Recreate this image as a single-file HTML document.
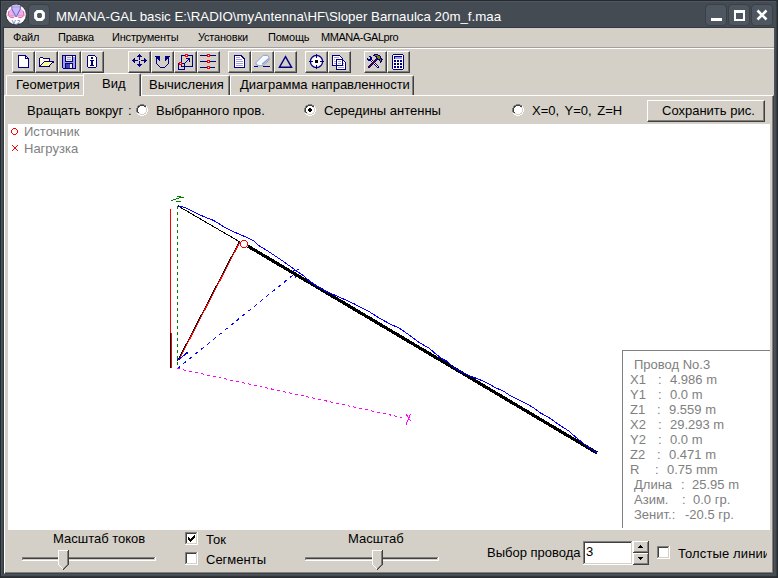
<!DOCTYPE html>
<html><head><meta charset="utf-8">
<style>
*{margin:0;padding:0;box-sizing:border-box}
html,body{width:778px;height:578px;overflow:hidden;background:#3a4046}
body{position:relative;font-family:"Liberation Sans",sans-serif;font-size:13px;color:#000}
.a{position:absolute}
.t{position:absolute;white-space:pre;line-height:15px}
#frame{left:0;top:0;width:778px;height:578px;background:#444b52}
#title{left:56px;top:9px;color:#fff;font-size:13.3px;line-height:16px}
.tbtn{position:absolute;top:4px;width:22px;height:22px;background:#4e575f;border:1px solid #3a4046;border-radius:4px}
#menu{left:4px;top:28px;width:770px;height:20px;background:#d4d0c8;border-bottom:1px solid #a0a0a0}
.mi{position:absolute;top:31px;font-size:11px;line-height:13px;letter-spacing:-0.2px}
#tool{left:4px;top:48px;width:770px;height:47px;background:#d4d0c8;border-top:1px solid #fff}
.btn{position:absolute;top:51px;width:23px;height:22px;background:#d4d0c8;border-left:1px solid #fff;border-top:1px solid #fff;border-right:1px solid #404040;border-bottom:1px solid #404040;box-shadow:inset -1px -1px 0 #808080}
.btn svg{position:absolute;left:0;top:0}
#panel{left:4px;top:95px;width:770px;height:479px;background:#d4d0c8;border-left:1px solid #fff;border-top:1px solid #fff;border-right:1px solid #404040;border-bottom:1px solid #404040;box-shadow:inset -1px -1px 0 #808080}
.tab{position:absolute;top:75px;height:20px;background:#d4d0c8;border-left:1px solid #fff;border-top:1px solid #fff;border-right:1px solid #404040;border-top-left-radius:2px;border-top-right-radius:2px;box-shadow:inset -1px 0 0 #808080}
.radio{position:absolute;width:12px;height:12px;border-radius:50%;background:#fff;border:1px solid #808080;box-shadow:inset 1px 1px 0 #404040}
#canvas{left:8px;top:124px;width:762px;height:406px;background:#fff;overflow:hidden}
.g{color:#808080}
.cb{position:absolute;width:13px;height:13px;background:#fff;border-left:1px solid #808080;border-top:1px solid #808080;border-right:1px solid #fff;border-bottom:1px solid #fff;box-shadow:inset 1px 1px 0 #404040}
</style></head><body>
<div id="frame" class="a"></div>
<div class="a" style="left:0px;top:0px;width:778px;height:1px;background:#262a2e"></div><div class="a" style="left:0px;top:0px;width:1px;height:578px;background:#25292d"></div><div class="a" style="left:777px;top:0px;width:1px;height:578px;background:#2a2e32"></div><div class="a" style="left:0px;top:577px;width:778px;height:1px;background:#2a2e32"></div><div class="a" style="left:1px;top:1px;width:776px;height:1px;background:#4f5860"></div><div class="a" style="left:1px;top:1px;width:1px;height:576px;background:#4b545c"></div><div class="a" style="left:776px;top:1px;width:1px;height:576px;background:#353b40"></div><div class="a" style="left:1px;top:576px;width:776px;height:1px;background:#2f3438"></div><div class="a" style="left:3px;top:27px;width:772px;height:1px;background:#33393f"></div><div class="a" style="left:3px;top:27px;width:1px;height:547px;background:#33393f"></div><div class="a" style="left:774px;top:28px;width:1px;height:546px;background:#4a535b"></div><div class="a" style="left:3px;top:574px;width:772px;height:1px;background:#48525a"></div>
<!-- title bar -->
<svg class="a" style="left:0;top:0" width="32" height="28" viewBox="0 0 32 28">
  <circle cx="16.1" cy="14.6" r="10.3" fill="#fff" stroke="#1c1c1c" stroke-width="0.8"/>
  <path d="M7.9 15.3 Q8.3 9.2 12.5 8.2 L19.5 8.2 Q23.9 9.2 24.3 15.3 Q22 18.2 19 17.6 L16 16.8 L13 17.6 Q10 18.2 7.9 15.3 Z" fill="#f6a8f6"/>
  <path d="M8.3 15.6 Q10.5 18.6 13.8 17.6 M23.9 15.6 Q21.7 18.6 18.4 17.6 M9 11 Q8.2 13 8.3 15 M23.2 11 Q24 13 23.9 15" fill="none" stroke="#d84a70" stroke-width="0.8"/>
  <clipPath id="cc"><circle cx="16.1" cy="14.6" r="10"/></clipPath><path clip-path="url(#cc)" d="M11.6 4 Q16.1 3 20.6 4 L20.3 9.2 L16.1 16.8 L11.9 9.2 Z" fill="#bcbcff" stroke="#4848a8" stroke-width="0.8"/>
  <line x1="12" y1="7" x2="20.2" y2="7" stroke="#e07090" stroke-width="0.6"/>
  <line x1="6" y1="15.3" x2="26.2" y2="15.3" stroke="#a8a0a0" stroke-width="0.6"/>
  <text x="16" y="23.6" font-size="6" text-anchor="middle" fill="#4a4aa0" font-family="Liberation Sans">V.2</text>
</svg>
<div class="tbtn" style="left:28px"></div>
<svg class="a" style="left:29px;top:5px" width="20" height="20"><path d="M8.4 6.6 L12.6 6.6 L14.4 8.4 L14.4 12.6 L12.6 14.4 L8.4 14.4 L6.6 12.6 L6.6 8.4 Z" fill="none" stroke="#fff" stroke-width="3"/></svg>
<div id="title" class="t">MMANA-GAL basic E:\RADIO\myAntenna\HF\Sloper Barnaulca 20m_f.maa</div>
<div class="tbtn" style="left:705px"></div>
<div class="tbtn" style="left:728px"></div>
<div class="tbtn" style="left:751px"></div>
<div class="a" style="left:711px;top:18px;width:11px;height:3px;background:#fff"></div>
<div class="a" style="left:734px;top:10px;width:11px;height:11px;border:2px solid #fff;border-top-width:3px"></div>
<svg class="a" style="left:752px;top:5px" width="20" height="20"><path d="M5.5 5.5 L14.5 14.5 M14.5 5.5 L5.5 14.5" stroke="#fff" stroke-width="2.6"/></svg>

<!-- menu -->
<div id="menu" class="a"></div>
<div class="mi" style="left:13px">Файл</div>
<div class="mi" style="left:58px">Правка</div>
<div class="mi" style="left:112px">Инструменты</div>
<div class="mi" style="left:198px">Установки</div>
<div class="mi" style="left:268px">Помощь</div>
<div class="mi" style="left:321px;letter-spacing:-0.45px">MMANA-GALpro</div>

<div id="tool" class="a"></div>
<div class="btn" style="left:12px"></div>
<div class="btn" style="left:35px"></div>
<div class="btn" style="left:58px"></div>
<div class="btn" style="left:81px"></div>
<div class="btn" style="left:128px"></div>
<div class="btn" style="left:151px"></div>
<div class="btn" style="left:174px"></div>
<div class="btn" style="left:197px"></div>
<div class="btn" style="left:228px"></div>
<div class="btn" style="left:251px"></div>
<div class="btn" style="left:274px"></div>
<div class="btn" style="left:305px"></div>
<div class="btn" style="left:328px"></div>
<div class="btn" style="left:364px"></div>
<div class="btn" style="left:387px"></div>
<!--ICONS--><svg class="a" style="left:0;top:0" width="778" height="100" viewBox="0 0 778 100" shape-rendering="crispEdges"><rect x="18" y="55" width="8" height="1" fill="#000080"/><rect x="18" y="56" width="1" height="1" fill="#000080"/><rect x="19" y="56" width="6" height="1" fill="#ffffff"/><rect x="25" y="56" width="2" height="1" fill="#000080"/><rect x="18" y="57" width="1" height="1" fill="#000080"/><rect x="19" y="57" width="6" height="1" fill="#ffffff"/><rect x="25" y="57" width="1" height="1" fill="#000080"/><rect x="26" y="57" width="1" height="1" fill="#ffffff"/><rect x="27" y="57" width="1" height="1" fill="#000080"/><rect x="18" y="58" width="1" height="1" fill="#000080"/><rect x="19" y="58" width="6" height="1" fill="#ffffff"/><rect x="25" y="58" width="4" height="1" fill="#000080"/><rect x="18" y="59" width="1" height="1" fill="#000080"/><rect x="19" y="59" width="9" height="1" fill="#ffffff"/><rect x="28" y="59" width="1" height="1" fill="#000080"/><rect x="18" y="60" width="1" height="1" fill="#000080"/><rect x="19" y="60" width="9" height="1" fill="#ffffff"/><rect x="28" y="60" width="1" height="1" fill="#000080"/><rect x="18" y="61" width="1" height="1" fill="#000080"/><rect x="19" y="61" width="9" height="1" fill="#ffffff"/><rect x="28" y="61" width="1" height="1" fill="#000080"/><rect x="18" y="62" width="1" height="1" fill="#000080"/><rect x="19" y="62" width="9" height="1" fill="#ffffff"/><rect x="28" y="62" width="1" height="1" fill="#000080"/><rect x="18" y="63" width="1" height="1" fill="#000080"/><rect x="19" y="63" width="9" height="1" fill="#ffffff"/><rect x="28" y="63" width="1" height="1" fill="#000080"/><rect x="18" y="64" width="1" height="1" fill="#000080"/><rect x="19" y="64" width="9" height="1" fill="#ffffff"/><rect x="28" y="64" width="1" height="1" fill="#000080"/><rect x="18" y="65" width="1" height="1" fill="#000080"/><rect x="19" y="65" width="9" height="1" fill="#ffffff"/><rect x="28" y="65" width="1" height="1" fill="#000080"/><rect x="18" y="66" width="1" height="1" fill="#000080"/><rect x="19" y="66" width="9" height="1" fill="#ffffff"/><rect x="28" y="66" width="1" height="1" fill="#000080"/><rect x="18" y="67" width="11" height="1" fill="#000080"/><rect x="40" y="57" width="3" height="1" fill="#000080"/><rect x="39" y="58" width="1" height="1" fill="#000080"/><rect x="40" y="58" width="3" height="1" fill="#ffffe0"/><rect x="43" y="58" width="7" height="1" fill="#000080"/><rect x="39" y="59" width="1" height="1" fill="#000080"/><rect x="40" y="59" width="9" height="1" fill="#ffffe0"/><rect x="49" y="59" width="1" height="1" fill="#000080"/><rect x="39" y="60" width="1" height="1" fill="#000080"/><rect x="40" y="60" width="9" height="1" fill="#ffffe0"/><rect x="49" y="60" width="1" height="1" fill="#000080"/><rect x="39" y="61" width="1" height="1" fill="#000080"/><rect x="40" y="61" width="4" height="1" fill="#ffffe0"/><rect x="44" y="61" width="10" height="1" fill="#000080"/><rect x="39" y="62" width="1" height="1" fill="#000080"/><rect x="40" y="62" width="3" height="1" fill="#ffffe0"/><rect x="43" y="62" width="1" height="1" fill="#000080"/><rect x="44" y="62" width="8" height="1" fill="#ffff99"/><rect x="52" y="62" width="2" height="1" fill="#000080"/><rect x="39" y="63" width="1" height="1" fill="#000080"/><rect x="40" y="63" width="2" height="1" fill="#ffffe0"/><rect x="42" y="63" width="1" height="1" fill="#000080"/><rect x="43" y="63" width="8" height="1" fill="#ffff99"/><rect x="51" y="63" width="1" height="1" fill="#000080"/><rect x="39" y="64" width="1" height="1" fill="#000080"/><rect x="40" y="64" width="1" height="1" fill="#ffffe0"/><rect x="41" y="64" width="1" height="1" fill="#000080"/><rect x="42" y="64" width="8" height="1" fill="#ffff99"/><rect x="50" y="64" width="1" height="1" fill="#000080"/><rect x="39" y="65" width="2" height="1" fill="#000080"/><rect x="41" y="65" width="8" height="1" fill="#ffff99"/><rect x="49" y="65" width="1" height="1" fill="#000080"/><rect x="39" y="66" width="11" height="1" fill="#000080"/><rect x="62" y="55" width="14" height="1" fill="#000080"/><rect x="62" y="56" width="1" height="1" fill="#000080"/><rect x="63" y="56" width="2" height="1" fill="#a0a0e0"/><rect x="65" y="56" width="1" height="1" fill="#000080"/><rect x="66" y="56" width="6" height="1" fill="#f0ecd8"/><rect x="72" y="56" width="1" height="1" fill="#000080"/><rect x="73" y="56" width="2" height="1" fill="#ffffff"/><rect x="75" y="56" width="1" height="1" fill="#000080"/><rect x="62" y="57" width="1" height="1" fill="#000080"/><rect x="63" y="57" width="2" height="1" fill="#a0a0e0"/><rect x="65" y="57" width="1" height="1" fill="#000080"/><rect x="66" y="57" width="1" height="1" fill="#f0ecd8"/><rect x="67" y="57" width="4" height="1" fill="#a0a0e0"/><rect x="71" y="57" width="1" height="1" fill="#f0ecd8"/><rect x="72" y="57" width="1" height="1" fill="#000080"/><rect x="73" y="57" width="2" height="1" fill="#a0a0e0"/><rect x="75" y="57" width="1" height="1" fill="#000080"/><rect x="62" y="58" width="1" height="1" fill="#000080"/><rect x="63" y="58" width="2" height="1" fill="#a0a0e0"/><rect x="65" y="58" width="1" height="1" fill="#000080"/><rect x="66" y="58" width="6" height="1" fill="#f0ecd8"/><rect x="72" y="58" width="1" height="1" fill="#000080"/><rect x="73" y="58" width="2" height="1" fill="#a0a0e0"/><rect x="75" y="58" width="1" height="1" fill="#000080"/><rect x="62" y="59" width="1" height="1" fill="#000080"/><rect x="63" y="59" width="2" height="1" fill="#a0a0e0"/><rect x="65" y="59" width="1" height="1" fill="#000080"/><rect x="66" y="59" width="1" height="1" fill="#f0ecd8"/><rect x="67" y="59" width="4" height="1" fill="#a0a0e0"/><rect x="71" y="59" width="1" height="1" fill="#f0ecd8"/><rect x="72" y="59" width="1" height="1" fill="#000080"/><rect x="73" y="59" width="2" height="1" fill="#a0a0e0"/><rect x="75" y="59" width="1" height="1" fill="#000080"/><rect x="62" y="60" width="1" height="1" fill="#000080"/><rect x="63" y="60" width="2" height="1" fill="#a0a0e0"/><rect x="65" y="60" width="1" height="1" fill="#000080"/><rect x="66" y="60" width="6" height="1" fill="#f0ecd8"/><rect x="72" y="60" width="1" height="1" fill="#000080"/><rect x="73" y="60" width="2" height="1" fill="#a0a0e0"/><rect x="75" y="60" width="1" height="1" fill="#000080"/><rect x="62" y="61" width="1" height="1" fill="#000080"/><rect x="63" y="61" width="2" height="1" fill="#a0a0e0"/><rect x="65" y="61" width="8" height="1" fill="#000080"/><rect x="73" y="61" width="2" height="1" fill="#a0a0e0"/><rect x="75" y="61" width="1" height="1" fill="#000080"/><rect x="62" y="62" width="1" height="1" fill="#000080"/><rect x="63" y="62" width="12" height="1" fill="#a0a0e0"/><rect x="75" y="62" width="1" height="1" fill="#000080"/><rect x="62" y="63" width="1" height="1" fill="#000080"/><rect x="63" y="63" width="2" height="1" fill="#a0a0e0"/><rect x="65" y="63" width="8" height="1" fill="#000080"/><rect x="73" y="63" width="2" height="1" fill="#a0a0e0"/><rect x="75" y="63" width="1" height="1" fill="#000080"/><rect x="62" y="64" width="1" height="1" fill="#000080"/><rect x="63" y="64" width="2" height="1" fill="#a0a0e0"/><rect x="65" y="64" width="1" height="1" fill="#000080"/><rect x="66" y="64" width="4" height="1" fill="#4040b8"/><rect x="70" y="64" width="2" height="1" fill="#f0ecd8"/><rect x="72" y="64" width="1" height="1" fill="#000080"/><rect x="73" y="64" width="2" height="1" fill="#a0a0e0"/><rect x="75" y="64" width="1" height="1" fill="#000080"/><rect x="62" y="65" width="1" height="1" fill="#000080"/><rect x="63" y="65" width="2" height="1" fill="#a0a0e0"/><rect x="65" y="65" width="1" height="1" fill="#000080"/><rect x="66" y="65" width="4" height="1" fill="#4040b8"/><rect x="70" y="65" width="2" height="1" fill="#f0ecd8"/><rect x="72" y="65" width="1" height="1" fill="#000080"/><rect x="73" y="65" width="2" height="1" fill="#a0a0e0"/><rect x="75" y="65" width="1" height="1" fill="#000080"/><rect x="62" y="66" width="1" height="1" fill="#000080"/><rect x="63" y="66" width="2" height="1" fill="#a0a0e0"/><rect x="65" y="66" width="1" height="1" fill="#000080"/><rect x="66" y="66" width="4" height="1" fill="#4040b8"/><rect x="70" y="66" width="2" height="1" fill="#f0ecd8"/><rect x="72" y="66" width="1" height="1" fill="#000080"/><rect x="73" y="66" width="2" height="1" fill="#a0a0e0"/><rect x="75" y="66" width="1" height="1" fill="#000080"/><rect x="62" y="67" width="1" height="1" fill="#000080"/><rect x="63" y="67" width="2" height="1" fill="#a0a0e0"/><rect x="65" y="67" width="1" height="1" fill="#000080"/><rect x="66" y="67" width="4" height="1" fill="#4040b8"/><rect x="70" y="67" width="2" height="1" fill="#f0ecd8"/><rect x="72" y="67" width="1" height="1" fill="#000080"/><rect x="73" y="67" width="2" height="1" fill="#a0a0e0"/><rect x="75" y="67" width="1" height="1" fill="#000080"/><rect x="63" y="68" width="13" height="1" fill="#000080"/><rect x="88" y="55" width="7" height="1" fill="#000080"/><rect x="87" y="56" width="1" height="1" fill="#000080"/><rect x="88" y="56" width="7" height="1" fill="#ffffff"/><rect x="95" y="56" width="1" height="1" fill="#000080"/><rect x="87" y="57" width="1" height="1" fill="#000080"/><rect x="88" y="57" width="3" height="1" fill="#ffffff"/><rect x="91" y="57" width="2" height="1" fill="#000080"/><rect x="93" y="57" width="3" height="1" fill="#ffffff"/><rect x="96" y="57" width="1" height="1" fill="#000080"/><rect x="87" y="58" width="1" height="1" fill="#000080"/><rect x="88" y="58" width="3" height="1" fill="#ffffff"/><rect x="91" y="58" width="2" height="1" fill="#000080"/><rect x="93" y="58" width="3" height="1" fill="#ffffff"/><rect x="96" y="58" width="1" height="1" fill="#000080"/><rect x="87" y="59" width="1" height="1" fill="#000080"/><rect x="88" y="59" width="8" height="1" fill="#ffffff"/><rect x="96" y="59" width="1" height="1" fill="#000080"/><rect x="87" y="60" width="1" height="1" fill="#000080"/><rect x="88" y="60" width="2" height="1" fill="#ffffff"/><rect x="90" y="60" width="4" height="1" fill="#000080"/><rect x="94" y="60" width="2" height="1" fill="#ffffff"/><rect x="96" y="60" width="1" height="1" fill="#000080"/><rect x="87" y="61" width="1" height="1" fill="#000080"/><rect x="88" y="61" width="3" height="1" fill="#ffffff"/><rect x="91" y="61" width="2" height="1" fill="#000080"/><rect x="93" y="61" width="3" height="1" fill="#ffffff"/><rect x="96" y="61" width="1" height="1" fill="#000080"/><rect x="87" y="62" width="1" height="1" fill="#000080"/><rect x="88" y="62" width="3" height="1" fill="#ffffff"/><rect x="91" y="62" width="2" height="1" fill="#000080"/><rect x="93" y="62" width="3" height="1" fill="#ffffff"/><rect x="96" y="62" width="1" height="1" fill="#000080"/><rect x="87" y="63" width="1" height="1" fill="#000080"/><rect x="88" y="63" width="3" height="1" fill="#ffffff"/><rect x="91" y="63" width="2" height="1" fill="#000080"/><rect x="93" y="63" width="3" height="1" fill="#ffffff"/><rect x="96" y="63" width="1" height="1" fill="#000080"/><rect x="87" y="64" width="1" height="1" fill="#000080"/><rect x="88" y="64" width="3" height="1" fill="#ffffff"/><rect x="91" y="64" width="2" height="1" fill="#000080"/><rect x="93" y="64" width="3" height="1" fill="#ffffff"/><rect x="96" y="64" width="1" height="1" fill="#000080"/><rect x="87" y="65" width="1" height="1" fill="#000080"/><rect x="88" y="65" width="2" height="1" fill="#ffffff"/><rect x="90" y="65" width="4" height="1" fill="#000080"/><rect x="94" y="65" width="2" height="1" fill="#ffffff"/><rect x="96" y="65" width="1" height="1" fill="#000080"/><rect x="87" y="66" width="1" height="1" fill="#000080"/><rect x="88" y="66" width="8" height="1" fill="#ffffff"/><rect x="96" y="66" width="1" height="1" fill="#000080"/><rect x="88" y="67" width="8" height="1" fill="#000080"/><rect x="139" y="54" width="1" height="1" fill="#000080"/><rect x="138" y="55" width="3" height="1" fill="#000080"/><rect x="137" y="56" width="5" height="1" fill="#000080"/><rect x="139" y="57" width="1" height="1" fill="#000080"/><rect x="134" y="58" width="1" height="1" fill="#000080"/><rect x="139" y="58" width="1" height="1" fill="#000080"/><rect x="144" y="58" width="1" height="1" fill="#000080"/><rect x="133" y="59" width="2" height="1" fill="#000080"/><rect x="139" y="59" width="1" height="1" fill="#000080"/><rect x="144" y="59" width="2" height="1" fill="#000080"/><rect x="132" y="60" width="6" height="1" fill="#000080"/><rect x="141" y="60" width="6" height="1" fill="#000080"/><rect x="133" y="61" width="2" height="1" fill="#000080"/><rect x="139" y="61" width="1" height="1" fill="#000080"/><rect x="144" y="61" width="2" height="1" fill="#000080"/><rect x="134" y="62" width="1" height="1" fill="#000080"/><rect x="139" y="62" width="1" height="1" fill="#000080"/><rect x="144" y="62" width="1" height="1" fill="#000080"/><rect x="139" y="63" width="1" height="1" fill="#000080"/><rect x="137" y="64" width="5" height="1" fill="#000080"/><rect x="138" y="65" width="3" height="1" fill="#000080"/><rect x="139" y="66" width="1" height="1" fill="#000080"/><rect x="155" y="56" width="5" height="1" fill="#000080"/><rect x="165" y="56" width="5" height="1" fill="#000080"/><rect x="156" y="57" width="4" height="1" fill="#000080"/><rect x="165" y="57" width="4" height="1" fill="#000080"/><rect x="156" y="58" width="4" height="1" fill="#000080"/><rect x="165" y="58" width="4" height="1" fill="#000080"/><rect x="156" y="59" width="1" height="1" fill="#000080"/><rect x="158" y="59" width="2" height="1" fill="#000080"/><rect x="165" y="59" width="2" height="1" fill="#000080"/><rect x="168" y="59" width="1" height="1" fill="#000080"/><rect x="156" y="60" width="1" height="1" fill="#000080"/><rect x="159" y="60" width="1" height="1" fill="#000080"/><rect x="165" y="60" width="1" height="1" fill="#000080"/><rect x="168" y="60" width="1" height="1" fill="#000080"/><rect x="156" y="61" width="1" height="1" fill="#000080"/><rect x="168" y="61" width="1" height="1" fill="#000080"/><rect x="156" y="62" width="1" height="1" fill="#000080"/><rect x="168" y="62" width="1" height="1" fill="#000080"/><rect x="156" y="63" width="1" height="1" fill="#000080"/><rect x="168" y="63" width="1" height="1" fill="#000080"/><rect x="157" y="64" width="1" height="1" fill="#000080"/><rect x="167" y="64" width="1" height="1" fill="#000080"/><rect x="158" y="65" width="1" height="1" fill="#000080"/><rect x="166" y="65" width="1" height="1" fill="#000080"/><rect x="159" y="66" width="1" height="1" fill="#000080"/><rect x="165" y="66" width="1" height="1" fill="#000080"/><rect x="160" y="67" width="5" height="1" fill="#000080"/><path d="M181.5 55.5 H192.5 V66.5 H181.5 Z M178.5 63.5 H184.5 V69.5 H178.5 Z" fill="none" stroke="#000080" stroke-width="1"/><rect x="186" y="58" width="4" height="1" fill="#000080"/><rect x="188" y="59" width="2" height="1" fill="#000080"/><rect x="187" y="60" width="1" height="1" fill="#000080"/><rect x="189" y="60" width="1" height="1" fill="#000080"/><rect x="186" y="61" width="1" height="1" fill="#000080"/><rect x="189" y="61" width="1" height="1" fill="#000080"/><rect x="185" y="62" width="1" height="1" fill="#000080"/><rect x="185" y="54" width="3" height="1" fill="#ff0000"/><rect x="185" y="55" width="1" height="1" fill="#ff0000"/><rect x="186" y="55" width="1" height="1" fill="#ffffff"/><rect x="187" y="55" width="1" height="1" fill="#ff0000"/><rect x="185" y="56" width="3" height="1" fill="#ff0000"/><rect x="179" y="62" width="3" height="1" fill="#ff0000"/><rect x="179" y="63" width="1" height="1" fill="#ff0000"/><rect x="180" y="63" width="1" height="1" fill="#ffffff"/><rect x="181" y="63" width="1" height="1" fill="#ff0000"/><rect x="179" y="64" width="3" height="1" fill="#ff0000"/><rect x="200" y="55" width="16" height="1" fill="#000080"/><rect x="207" y="54" width="3" height="1" fill="#ff0000"/><rect x="207" y="55" width="1" height="1" fill="#ff0000"/><rect x="208" y="55" width="1" height="1" fill="#ffffff"/><rect x="209" y="55" width="1" height="1" fill="#ff0000"/><rect x="207" y="56" width="3" height="1" fill="#ff0000"/><rect x="200" y="61" width="16" height="1" fill="#000080"/><rect x="207" y="60" width="3" height="1" fill="#ff0000"/><rect x="207" y="61" width="1" height="1" fill="#ff0000"/><rect x="208" y="61" width="1" height="1" fill="#ffffff"/><rect x="209" y="61" width="1" height="1" fill="#ff0000"/><rect x="207" y="62" width="3" height="1" fill="#ff0000"/><rect x="200" y="67" width="15" height="1" fill="#000080"/><rect x="207" y="66" width="3" height="1" fill="#ff0000"/><rect x="207" y="67" width="1" height="1" fill="#ff0000"/><rect x="208" y="67" width="1" height="1" fill="#ffffff"/><rect x="209" y="67" width="1" height="1" fill="#ff0000"/><rect x="207" y="68" width="3" height="1" fill="#ff0000"/><rect x="234" y="55" width="8" height="1" fill="#000080"/><rect x="234" y="56" width="1" height="1" fill="#000080"/><rect x="235" y="56" width="6" height="1" fill="#ffffff"/><rect x="241" y="56" width="2" height="1" fill="#000080"/><rect x="234" y="57" width="1" height="1" fill="#000080"/><rect x="235" y="57" width="1" height="1" fill="#ffffff"/><rect x="236" y="57" width="4" height="1" fill="#a0a0e0"/><rect x="240" y="57" width="2" height="1" fill="#ffffff"/><rect x="242" y="57" width="2" height="1" fill="#000080"/><rect x="234" y="58" width="1" height="1" fill="#000080"/><rect x="235" y="58" width="8" height="1" fill="#ffffff"/><rect x="243" y="58" width="2" height="1" fill="#000080"/><rect x="234" y="59" width="1" height="1" fill="#000080"/><rect x="235" y="59" width="1" height="1" fill="#ffffff"/><rect x="236" y="59" width="6" height="1" fill="#a0a0e0"/><rect x="242" y="59" width="2" height="1" fill="#ffffff"/><rect x="244" y="59" width="1" height="1" fill="#000080"/><rect x="234" y="60" width="1" height="1" fill="#000080"/><rect x="235" y="60" width="9" height="1" fill="#ffffff"/><rect x="244" y="60" width="1" height="1" fill="#000080"/><rect x="234" y="61" width="1" height="1" fill="#000080"/><rect x="235" y="61" width="1" height="1" fill="#ffffff"/><rect x="236" y="61" width="7" height="1" fill="#a0a0e0"/><rect x="243" y="61" width="1" height="1" fill="#ffffff"/><rect x="244" y="61" width="1" height="1" fill="#000080"/><rect x="234" y="62" width="1" height="1" fill="#000080"/><rect x="235" y="62" width="9" height="1" fill="#ffffff"/><rect x="244" y="62" width="1" height="1" fill="#000080"/><rect x="234" y="63" width="1" height="1" fill="#000080"/><rect x="235" y="63" width="1" height="1" fill="#ffffff"/><rect x="236" y="63" width="7" height="1" fill="#a0a0e0"/><rect x="243" y="63" width="1" height="1" fill="#ffffff"/><rect x="244" y="63" width="1" height="1" fill="#000080"/><rect x="234" y="64" width="1" height="1" fill="#000080"/><rect x="235" y="64" width="9" height="1" fill="#ffffff"/><rect x="244" y="64" width="1" height="1" fill="#000080"/><rect x="234" y="65" width="1" height="1" fill="#000080"/><rect x="235" y="65" width="1" height="1" fill="#ffffff"/><rect x="236" y="65" width="7" height="1" fill="#a0a0e0"/><rect x="243" y="65" width="1" height="1" fill="#ffffff"/><rect x="244" y="65" width="1" height="1" fill="#000080"/><rect x="234" y="66" width="1" height="1" fill="#000080"/><rect x="235" y="66" width="9" height="1" fill="#ffffff"/><rect x="244" y="66" width="1" height="1" fill="#000080"/><rect x="234" y="67" width="11" height="1" fill="#000080"/><g shape-rendering="auto"><path d="M256 62.6 L263.2 55.3 L267.6 55.4 L269.2 57.6 L268.8 60.4 L263.2 65.2 L260 65.9 L256.3 64.6 Z" fill="#f4f8ff" stroke="#7f94c8" stroke-width="0.9"/><path d="M262.5 65 L268.8 59.5 L269 57.5 L262 63.5 Z" fill="#8fa0c8"/></g><rect x="254" y="66" width="4" height="1" fill="#000080"/><rect x="263" y="66" width="7" height="1" fill="#000080"/><path d="M285.5 56.6 L291.6 67.3 H279.4 Z" fill="none" stroke="#000080" stroke-width="1.4" shape-rendering="auto"/><circle cx="316.5" cy="61.5" r="6.1" fill="#fff" stroke="#000080" stroke-width="1.3" shape-rendering="auto"/><rect x="309" y="61" width="4" height="1" fill="#000080"/><rect x="320" y="61" width="4" height="1" fill="#000080"/><rect x="316" y="54" width="1" height="4" fill="#000080"/><rect x="316" y="65" width="1" height="4" fill="#000080"/><rect x="315" y="60" width="3" height="3" fill="#000000"/><path d="M332.5 55.5 H339.5 L342.5 58.5 V65.5 H332.5 Z" fill="#fff" stroke="#000080" stroke-width="1"/><rect x="334" y="57" width="5" height="1" fill="#a0a0e0"/><rect x="334" y="59" width="1" height="1" fill="#a0a0e0"/><rect x="334" y="61" width="2" height="1" fill="#a0a0e0"/><rect x="334" y="63" width="2" height="1" fill="#a0a0e0"/><path d="M336.5 59.5 H342.5 L345.5 62.5 V69.5 H336.5 Z" fill="#fff" stroke="#000080" stroke-width="1"/><path d="M342.5 59.5 V65.5 H336.5" fill="none" stroke="#000080" stroke-width="1"/><rect x="338" y="61" width="3" height="1" fill="#a0a0e0"/><rect x="338" y="63" width="3" height="1" fill="#a0a0e0"/><rect x="343" y="63" width="1" height="1" fill="#a0a0e0"/><rect x="343" y="65" width="1" height="1" fill="#a0a0e0"/><rect x="338" y="67" width="6" height="1" fill="#a0a0e0"/><rect x="374" y="54" width="4" height="1" fill="#000080"/><rect x="373" y="55" width="2" height="1" fill="#000080"/><rect x="375" y="55" width="3" height="1" fill="#808000"/><rect x="378" y="55" width="2" height="1" fill="#000080"/><rect x="369" y="56" width="2" height="1" fill="#000080"/><rect x="375" y="56" width="2" height="1" fill="#000080"/><rect x="377" y="56" width="3" height="1" fill="#808000"/><rect x="380" y="56" width="1" height="1" fill="#000080"/><rect x="370" y="57" width="2" height="1" fill="#000080"/><rect x="376" y="57" width="1" height="1" fill="#000080"/><rect x="377" y="57" width="3" height="1" fill="#808000"/><rect x="380" y="57" width="1" height="1" fill="#000080"/><rect x="367" y="58" width="1" height="1" fill="#000080"/><rect x="370" y="58" width="2" height="1" fill="#000080"/><rect x="376" y="58" width="2" height="1" fill="#000080"/><rect x="378" y="58" width="2" height="1" fill="#808000"/><rect x="380" y="58" width="2" height="1" fill="#000080"/><rect x="367" y="59" width="5" height="1" fill="#000080"/><rect x="375" y="59" width="1" height="1" fill="#000080"/><rect x="376" y="59" width="1" height="1" fill="#900000"/><rect x="377" y="59" width="3" height="1" fill="#000080"/><rect x="380" y="59" width="1" height="1" fill="#808000"/><rect x="381" y="59" width="2" height="1" fill="#000080"/><rect x="368" y="60" width="3" height="1" fill="#000080"/><rect x="371" y="60" width="1" height="1" fill="#ffffff"/><rect x="372" y="60" width="1" height="1" fill="#000080"/><rect x="374" y="60" width="1" height="1" fill="#000080"/><rect x="375" y="60" width="1" height="1" fill="#900000"/><rect x="376" y="60" width="1" height="1" fill="#000080"/><rect x="379" y="60" width="1" height="1" fill="#000080"/><rect x="380" y="60" width="1" height="1" fill="#808000"/><rect x="381" y="60" width="1" height="1" fill="#000080"/><rect x="371" y="61" width="1" height="1" fill="#000080"/><rect x="372" y="61" width="1" height="1" fill="#ffffff"/><rect x="373" y="61" width="1" height="1" fill="#000080"/><rect x="374" y="61" width="1" height="1" fill="#900000"/><rect x="375" y="61" width="1" height="1" fill="#000080"/><rect x="380" y="61" width="2" height="1" fill="#000080"/><rect x="372" y="62" width="1" height="1" fill="#000080"/><rect x="373" y="62" width="1" height="1" fill="#900000"/><rect x="374" y="62" width="1" height="1" fill="#000080"/><rect x="380" y="62" width="1" height="1" fill="#000080"/><rect x="371" y="63" width="1" height="1" fill="#000080"/><rect x="372" y="63" width="1" height="1" fill="#900000"/><rect x="373" y="63" width="1" height="1" fill="#000080"/><rect x="374" y="63" width="1" height="1" fill="#ffffff"/><rect x="375" y="63" width="1" height="1" fill="#000080"/><rect x="370" y="64" width="1" height="1" fill="#000080"/><rect x="371" y="64" width="1" height="1" fill="#900000"/><rect x="372" y="64" width="1" height="1" fill="#000080"/><rect x="374" y="64" width="1" height="1" fill="#000080"/><rect x="375" y="64" width="1" height="1" fill="#ffffff"/><rect x="376" y="64" width="1" height="1" fill="#000080"/><rect x="369" y="65" width="1" height="1" fill="#000080"/><rect x="370" y="65" width="1" height="1" fill="#900000"/><rect x="371" y="65" width="1" height="1" fill="#000080"/><rect x="375" y="65" width="1" height="1" fill="#000080"/><rect x="376" y="65" width="1" height="1" fill="#ffffff"/><rect x="377" y="65" width="1" height="1" fill="#000080"/><rect x="368" y="66" width="1" height="1" fill="#000080"/><rect x="369" y="66" width="1" height="1" fill="#900000"/><rect x="370" y="66" width="1" height="1" fill="#000080"/><rect x="376" y="66" width="1" height="1" fill="#000080"/><rect x="377" y="66" width="1" height="1" fill="#ffffff"/><rect x="378" y="66" width="1" height="1" fill="#000080"/><rect x="368" y="67" width="2" height="1" fill="#000080"/><rect x="377" y="67" width="2" height="1" fill="#000080"/><rect x="393" y="54" width="10" height="1" fill="#000080"/><rect x="392" y="55" width="1" height="1" fill="#000080"/><rect x="393" y="55" width="10" height="1" fill="#ffffff"/><rect x="403" y="55" width="1" height="1" fill="#000080"/><rect x="392" y="56" width="1" height="1" fill="#000080"/><rect x="393" y="56" width="1" height="1" fill="#ffffff"/><rect x="394" y="56" width="8" height="1" fill="#000080"/><rect x="402" y="56" width="1" height="1" fill="#ffffff"/><rect x="403" y="56" width="1" height="1" fill="#000080"/><rect x="392" y="57" width="1" height="1" fill="#000080"/><rect x="393" y="57" width="1" height="1" fill="#ffffff"/><rect x="394" y="57" width="1" height="1" fill="#000080"/><rect x="395" y="57" width="7" height="1" fill="#a0a0e0"/><rect x="402" y="57" width="1" height="1" fill="#ffffff"/><rect x="403" y="57" width="1" height="1" fill="#000080"/><rect x="392" y="58" width="1" height="1" fill="#000080"/><rect x="393" y="58" width="1" height="1" fill="#ffffff"/><rect x="394" y="58" width="1" height="1" fill="#000080"/><rect x="395" y="58" width="7" height="1" fill="#a0a0e0"/><rect x="402" y="58" width="1" height="1" fill="#ffffff"/><rect x="403" y="58" width="1" height="1" fill="#000080"/><rect x="392" y="59" width="1" height="1" fill="#000080"/><rect x="393" y="59" width="10" height="1" fill="#ffffff"/><rect x="403" y="59" width="1" height="1" fill="#000080"/><rect x="392" y="60" width="1" height="1" fill="#000080"/><rect x="393" y="60" width="1" height="1" fill="#ffffff"/><rect x="394" y="60" width="2" height="1" fill="#000080"/><rect x="396" y="60" width="1" height="1" fill="#ffffff"/><rect x="397" y="60" width="2" height="1" fill="#000080"/><rect x="399" y="60" width="1" height="1" fill="#ffffff"/><rect x="400" y="60" width="2" height="1" fill="#000080"/><rect x="402" y="60" width="1" height="1" fill="#ffffff"/><rect x="403" y="60" width="1" height="1" fill="#000080"/><rect x="392" y="61" width="1" height="1" fill="#000080"/><rect x="393" y="61" width="1" height="1" fill="#ffffff"/><rect x="394" y="61" width="2" height="1" fill="#000080"/><rect x="396" y="61" width="1" height="1" fill="#ffffff"/><rect x="397" y="61" width="2" height="1" fill="#000080"/><rect x="399" y="61" width="1" height="1" fill="#ffffff"/><rect x="400" y="61" width="2" height="1" fill="#000080"/><rect x="402" y="61" width="1" height="1" fill="#ffffff"/><rect x="403" y="61" width="1" height="1" fill="#000080"/><rect x="392" y="62" width="1" height="1" fill="#000080"/><rect x="393" y="62" width="10" height="1" fill="#ffffff"/><rect x="403" y="62" width="1" height="1" fill="#000080"/><rect x="392" y="63" width="1" height="1" fill="#000080"/><rect x="393" y="63" width="1" height="1" fill="#ffffff"/><rect x="394" y="63" width="2" height="1" fill="#000080"/><rect x="396" y="63" width="1" height="1" fill="#ffffff"/><rect x="397" y="63" width="2" height="1" fill="#000080"/><rect x="399" y="63" width="1" height="1" fill="#ffffff"/><rect x="400" y="63" width="2" height="1" fill="#000080"/><rect x="402" y="63" width="1" height="1" fill="#ffffff"/><rect x="403" y="63" width="1" height="1" fill="#000080"/><rect x="392" y="64" width="1" height="1" fill="#000080"/><rect x="393" y="64" width="1" height="1" fill="#ffffff"/><rect x="394" y="64" width="2" height="1" fill="#000080"/><rect x="396" y="64" width="1" height="1" fill="#ffffff"/><rect x="397" y="64" width="2" height="1" fill="#000080"/><rect x="399" y="64" width="1" height="1" fill="#ffffff"/><rect x="400" y="64" width="2" height="1" fill="#000080"/><rect x="402" y="64" width="1" height="1" fill="#ffffff"/><rect x="403" y="64" width="1" height="1" fill="#000080"/><rect x="392" y="65" width="1" height="1" fill="#000080"/><rect x="393" y="65" width="10" height="1" fill="#ffffff"/><rect x="403" y="65" width="1" height="1" fill="#000080"/><rect x="392" y="66" width="1" height="1" fill="#000080"/><rect x="393" y="66" width="1" height="1" fill="#ffffff"/><rect x="394" y="66" width="2" height="1" fill="#000080"/><rect x="396" y="66" width="1" height="1" fill="#ffffff"/><rect x="397" y="66" width="2" height="1" fill="#000080"/><rect x="399" y="66" width="1" height="1" fill="#ffffff"/><rect x="400" y="66" width="2" height="1" fill="#000080"/><rect x="402" y="66" width="1" height="1" fill="#ffffff"/><rect x="403" y="66" width="1" height="1" fill="#000080"/><rect x="392" y="67" width="1" height="1" fill="#000080"/><rect x="393" y="67" width="1" height="1" fill="#ffffff"/><rect x="394" y="67" width="2" height="1" fill="#000080"/><rect x="396" y="67" width="1" height="1" fill="#ffffff"/><rect x="397" y="67" width="2" height="1" fill="#000080"/><rect x="399" y="67" width="1" height="1" fill="#ffffff"/><rect x="400" y="67" width="2" height="1" fill="#000080"/><rect x="402" y="67" width="1" height="1" fill="#ffffff"/><rect x="403" y="67" width="1" height="1" fill="#000080"/><rect x="392" y="68" width="1" height="1" fill="#000080"/><rect x="393" y="68" width="10" height="1" fill="#ffffff"/><rect x="403" y="68" width="1" height="1" fill="#000080"/><rect x="393" y="69" width="10" height="1" fill="#000080"/></svg><!--/ICONS-->

<!-- panel -->
<div id="panel" class="a"></div>
<div class="tab" style="left:6px;width:80px"></div>
<div class="tab" style="left:141px;width:89px"></div>
<div class="tab" style="left:230px;width:184px"></div>
<div class="a" style="left:83px;top:73px;width:58px;height:23px;background:#d4d0c8;border-left:1px solid #fff;border-top:1px solid #fff;border-right:1px solid #404040;border-top-left-radius:2px;border-top-right-radius:2px;box-shadow:inset -1px 0 0 #808080"></div>
<div class="t" style="left:16px;top:77px">Геометрия</div>
<div class="t" style="left:102px;top:76px">Вид</div>
<div class="t" style="left:149px;top:77px">Вычисления</div>
<div class="t" style="left:240px;top:77px">Диаграмма направленности</div>

<div class="t" style="left:27px;top:103px;word-spacing:1.1px">Вращать вокруг :</div>
<div class="t" style="left:156px;top:103px">Выбранного пров.</div>
<div class="t" style="left:324px;top:103px">Середины антенны</div>
<div class="t" style="left:532px;top:103px;word-spacing:2px">X=0, Y=0, Z=H</div>
<div class="a" style="left:647px;top:100px;width:118px;height:22px;background:#d4d0c8;border-left:1px solid #fff;border-top:1px solid #fff;border-right:1px solid #404040;border-bottom:1px solid #404040;box-shadow:inset -1px -1px 0 #808080"></div>
<div class="t" style="left:662px;top:103px">Сохранить рис.</div>

<!-- canvas -->
<div id="canvas" class="a"></div>
<svg class="a" style="left:0;top:0" width="778" height="578" viewBox="0 0 778 578">
<g fill="none" stroke-linecap="butt" shape-rendering="crispEdges">
<line x1="170.5" y1="209" x2="170.5" y2="368" stroke="#ff0000" stroke-width="1"/>
<line x1="170.5" y1="333" x2="170.5" y2="368" stroke="#000" stroke-width="1"/>
<line x1="171.5" y1="333" x2="171.5" y2="368" stroke="#ff0000" stroke-width="1"/>
<line x1="177.5" y1="206" x2="177.5" y2="369" stroke="#008000" stroke-width="1" stroke-dasharray="3 3"/>
<path d="M176.5 196.5 H180.5 M176 198.5 L184 197 M171 200.5 L178 198.5 M176 201.5 H180.5" stroke="#008000" stroke-width="1"/>
<line x1="177.5" y1="368.5" x2="294" y2="274.2" stroke="#0000ff" stroke-width="1" stroke-dasharray="3.5 4.1"/>
<path d="M293.5 271 L299 269.5 M295.5 274.5 V277.5" stroke="#0000ff" stroke-width="1"/>
<line x1="177.5" y1="368.5" x2="402" y2="417.5" stroke="#ff00ff" stroke-width="1" stroke-dasharray="3 3"/>
<path d="M406 414 L410.5 421 M410.5 414 L406 424.5" stroke="#ff00ff" stroke-width="1"/>
<line x1="177.6" y1="205.7" x2="240" y2="242" stroke="#000" stroke-width="1"/>
<line x1="248" y1="246.2" x2="597" y2="452.9" stroke="#000" stroke-width="3.2"/>
<line x1="177.8" y1="360.5" x2="239.4" y2="241.4" stroke="#000" stroke-width="1"/>
<line x1="178.6" y1="360.5" x2="240.2" y2="241.4" stroke="#ff0000" stroke-width="1"/>
<line x1="177" y1="361" x2="187.6" y2="352.2" stroke="#000" stroke-width="1"/>
<line x1="177.5" y1="360" x2="188" y2="352.7" stroke="#0000ff" stroke-width="1"/>
<polyline points="177.6,205.7 185.3,207.7 195.6,212.9 205.8,217.5 214,220.6 224.4,227.2 235,232.4 244.3,236.3 254.5,241.3 258.3,245.2 266.1,249.9 275.5,256.1 284.8,262.4 295,269.9 302.8,275.1 309,280.6 318.3,286.8 327.7,292.2 335.5,295.4 344.8,299.6 355,304.2 360,307.2 369.3,311.7 379.5,318.3 391.1,324.5 399.7,328.4 409.8,335.4 420,343 429.3,348.2 434,352.5 441.8,358.7 447.2,361.4 453.5,367.2 460.5,371.5 469.8,375.8 480,379.8 487.8,383.2 495.6,387.8 503.3,391 509.6,395.2 517.4,399.1 526.7,403.8 532.9,407.3 540,412.7 549.3,417.8 557.9,424 568.8,431 575,436.5 583.6,443.5 596.9,453" stroke="#0000ff" stroke-width="1"/>
<circle cx="244" cy="244" r="3.5" fill="#fff" stroke="#ff0000" stroke-width="1"/>
<rect x="13" y="128" width="1" height="1" fill="#ff0000"/><rect x="14" y="128" width="1" height="1" fill="#ff0000"/><rect x="15" y="128" width="1" height="1" fill="#ff0000"/><rect x="12" y="129" width="1" height="1" fill="#ff0000"/><rect x="16" y="129" width="1" height="1" fill="#ff0000"/><rect x="11" y="130" width="1" height="1" fill="#ff0000"/><rect x="17" y="130" width="1" height="1" fill="#ff0000"/><rect x="11" y="131" width="1" height="1" fill="#ff0000"/><rect x="17" y="131" width="1" height="1" fill="#ff0000"/><rect x="11" y="132" width="1" height="1" fill="#ff0000"/><rect x="17" y="132" width="1" height="1" fill="#ff0000"/><rect x="12" y="133" width="1" height="1" fill="#ff0000"/><rect x="16" y="133" width="1" height="1" fill="#ff0000"/><rect x="13" y="134" width="1" height="1" fill="#ff0000"/><rect x="14" y="134" width="1" height="1" fill="#ff0000"/><rect x="15" y="134" width="1" height="1" fill="#ff0000"/>
<rect x="12" y="145" width="1" height="1" fill="#ff0000"/><rect x="17" y="145" width="1" height="1" fill="#ff0000"/><rect x="13" y="146" width="1" height="1" fill="#ff0000"/><rect x="16" y="146" width="1" height="1" fill="#ff0000"/><rect x="14" y="147" width="1" height="1" fill="#ff0000"/><rect x="15" y="147" width="1" height="1" fill="#ff0000"/><rect x="14" y="148" width="1" height="1" fill="#ff0000"/><rect x="15" y="148" width="1" height="1" fill="#ff0000"/><rect x="13" y="149" width="1" height="1" fill="#ff0000"/><rect x="16" y="149" width="1" height="1" fill="#ff0000"/><rect x="12" y="150" width="1" height="1" fill="#ff0000"/><rect x="17" y="150" width="1" height="1" fill="#ff0000"/>
</g>
</svg>
<div class="t g" style="left:24px;top:124px">Источник</div>
<div class="t g" style="left:24px;top:141px">Нагрузка</div>
<div class="a" style="left:622px;top:350px;width:148px;height:178px;border-left:1px solid #808080;border-top:1px solid #808080;background:#fff"></div>
<div class="t g" style="left:634px;top:357px">Провод No.3</div>
<div class="t g" style="left:630px;top:372px">X1</div><div class="t g" style="left:658px;top:372px">:</div><div class="t g" style="left:670px;top:372px">4.986 m</div>
<div class="t g" style="left:630px;top:387px">Y1</div><div class="t g" style="left:658px;top:387px">:</div><div class="t g" style="left:670px;top:387px">0.0 m</div>
<div class="t g" style="left:630px;top:402px">Z1</div><div class="t g" style="left:657px;top:402px">:</div><div class="t g" style="left:669px;top:402px">9.559 m</div>
<div class="t g" style="left:630px;top:417px">X2</div><div class="t g" style="left:658px;top:417px">:</div><div class="t g" style="left:670px;top:417px">29.293 m</div>
<div class="t g" style="left:630px;top:432px">Y2</div><div class="t g" style="left:658px;top:432px">:</div><div class="t g" style="left:670px;top:432px">0.0 m</div>
<div class="t g" style="left:630px;top:447px">Z2</div><div class="t g" style="left:657px;top:447px">:</div><div class="t g" style="left:669px;top:447px">0.471 m</div>
<div class="t g" style="left:630px;top:462px">R</div><div class="t g" style="left:655px;top:462px">:</div><div class="t g" style="left:667px;top:462px">0.75 mm</div>
<div class="t g" style="left:634px;top:477px">Длина</div><div class="t g" style="left:681px;top:477px">:</div><div class="t g" style="left:692px;top:477px">25.95 m</div>
<div class="t g" style="left:634px;top:492px">Азим.</div><div class="t g" style="left:682px;top:492px">:</div><div class="t g" style="left:693px;top:492px">0.0 гр.</div>
<div class="t g" style="left:634px;top:507px">Зенит.:</div><div class="t g" style="left:685px;top:507px">-20.5 гр.</div>

<!-- bottom controls -->
<div class="t" style="left:53px;top:531px">Масштаб токов</div>
<div class="t" style="left:206px;top:532px">Ток</div>
<div class="t" style="left:206px;top:552px">Сегменты</div>
<div class="t" style="left:348px;top:531px">Масштаб</div>
<div class="t" style="left:487px;top:545px">Выбор провода</div>
<!--WIDGETS--><svg class="a" style="left:0;top:0" width="778" height="578" viewBox="0 0 778 578" shape-rendering="crispEdges"><rect x="140" y="104" width="4" height="1" fill="#808080"/><rect x="138" y="105" width="2" height="1" fill="#808080"/><rect x="140" y="105" width="4" height="1" fill="#404040"/><rect x="144" y="105" width="2" height="1" fill="#808080"/><rect x="137" y="106" width="1" height="1" fill="#808080"/><rect x="138" y="106" width="2" height="1" fill="#404040"/><rect x="140" y="106" width="4" height="1" fill="#ffffff"/><rect x="144" y="106" width="2" height="1" fill="#404040"/><rect x="146" y="106" width="1" height="1" fill="#ffffff"/><rect x="137" y="107" width="1" height="1" fill="#808080"/><rect x="138" y="107" width="1" height="1" fill="#404040"/><rect x="139" y="107" width="6" height="1" fill="#ffffff"/><rect x="145" y="107" width="1" height="1" fill="#d4d0c8"/><rect x="146" y="107" width="1" height="1" fill="#ffffff"/><rect x="136" y="108" width="1" height="1" fill="#808080"/><rect x="137" y="108" width="1" height="1" fill="#404040"/><rect x="138" y="108" width="8" height="1" fill="#ffffff"/><rect x="146" y="108" width="1" height="1" fill="#d4d0c8"/><rect x="147" y="108" width="1" height="1" fill="#ffffff"/><rect x="136" y="109" width="1" height="1" fill="#808080"/><rect x="137" y="109" width="1" height="1" fill="#404040"/><rect x="138" y="109" width="8" height="1" fill="#ffffff"/><rect x="146" y="109" width="1" height="1" fill="#d4d0c8"/><rect x="147" y="109" width="1" height="1" fill="#ffffff"/><rect x="136" y="110" width="1" height="1" fill="#808080"/><rect x="137" y="110" width="1" height="1" fill="#404040"/><rect x="138" y="110" width="8" height="1" fill="#ffffff"/><rect x="146" y="110" width="1" height="1" fill="#d4d0c8"/><rect x="147" y="110" width="1" height="1" fill="#ffffff"/><rect x="136" y="111" width="1" height="1" fill="#808080"/><rect x="137" y="111" width="1" height="1" fill="#404040"/><rect x="138" y="111" width="8" height="1" fill="#ffffff"/><rect x="146" y="111" width="1" height="1" fill="#d4d0c8"/><rect x="147" y="111" width="1" height="1" fill="#ffffff"/><rect x="137" y="112" width="1" height="1" fill="#808080"/><rect x="138" y="112" width="1" height="1" fill="#404040"/><rect x="139" y="112" width="6" height="1" fill="#ffffff"/><rect x="145" y="112" width="1" height="1" fill="#d4d0c8"/><rect x="146" y="112" width="1" height="1" fill="#ffffff"/><rect x="137" y="113" width="1" height="1" fill="#ffffff"/><rect x="138" y="113" width="2" height="1" fill="#d4d0c8"/><rect x="140" y="113" width="4" height="1" fill="#ffffff"/><rect x="144" y="113" width="2" height="1" fill="#d4d0c8"/><rect x="146" y="113" width="1" height="1" fill="#ffffff"/><rect x="138" y="114" width="2" height="1" fill="#ffffff"/><rect x="140" y="114" width="4" height="1" fill="#d4d0c8"/><rect x="144" y="114" width="2" height="1" fill="#ffffff"/><rect x="140" y="115" width="4" height="1" fill="#ffffff"/><rect x="308" y="104" width="4" height="1" fill="#808080"/><rect x="306" y="105" width="2" height="1" fill="#808080"/><rect x="308" y="105" width="4" height="1" fill="#404040"/><rect x="312" y="105" width="2" height="1" fill="#808080"/><rect x="305" y="106" width="1" height="1" fill="#808080"/><rect x="306" y="106" width="2" height="1" fill="#404040"/><rect x="308" y="106" width="4" height="1" fill="#ffffff"/><rect x="312" y="106" width="2" height="1" fill="#404040"/><rect x="314" y="106" width="1" height="1" fill="#ffffff"/><rect x="305" y="107" width="1" height="1" fill="#808080"/><rect x="306" y="107" width="1" height="1" fill="#404040"/><rect x="307" y="107" width="6" height="1" fill="#ffffff"/><rect x="313" y="107" width="1" height="1" fill="#d4d0c8"/><rect x="314" y="107" width="1" height="1" fill="#ffffff"/><rect x="304" y="108" width="1" height="1" fill="#808080"/><rect x="305" y="108" width="1" height="1" fill="#404040"/><rect x="306" y="108" width="8" height="1" fill="#ffffff"/><rect x="314" y="108" width="1" height="1" fill="#d4d0c8"/><rect x="315" y="108" width="1" height="1" fill="#ffffff"/><rect x="304" y="109" width="1" height="1" fill="#808080"/><rect x="305" y="109" width="1" height="1" fill="#404040"/><rect x="306" y="109" width="8" height="1" fill="#ffffff"/><rect x="314" y="109" width="1" height="1" fill="#d4d0c8"/><rect x="315" y="109" width="1" height="1" fill="#ffffff"/><rect x="304" y="110" width="1" height="1" fill="#808080"/><rect x="305" y="110" width="1" height="1" fill="#404040"/><rect x="306" y="110" width="8" height="1" fill="#ffffff"/><rect x="314" y="110" width="1" height="1" fill="#d4d0c8"/><rect x="315" y="110" width="1" height="1" fill="#ffffff"/><rect x="304" y="111" width="1" height="1" fill="#808080"/><rect x="305" y="111" width="1" height="1" fill="#404040"/><rect x="306" y="111" width="8" height="1" fill="#ffffff"/><rect x="314" y="111" width="1" height="1" fill="#d4d0c8"/><rect x="315" y="111" width="1" height="1" fill="#ffffff"/><rect x="305" y="112" width="1" height="1" fill="#808080"/><rect x="306" y="112" width="1" height="1" fill="#404040"/><rect x="307" y="112" width="6" height="1" fill="#ffffff"/><rect x="313" y="112" width="1" height="1" fill="#d4d0c8"/><rect x="314" y="112" width="1" height="1" fill="#ffffff"/><rect x="305" y="113" width="1" height="1" fill="#ffffff"/><rect x="306" y="113" width="2" height="1" fill="#d4d0c8"/><rect x="308" y="113" width="4" height="1" fill="#ffffff"/><rect x="312" y="113" width="2" height="1" fill="#d4d0c8"/><rect x="314" y="113" width="1" height="1" fill="#ffffff"/><rect x="306" y="114" width="2" height="1" fill="#ffffff"/><rect x="308" y="114" width="4" height="1" fill="#d4d0c8"/><rect x="312" y="114" width="2" height="1" fill="#ffffff"/><rect x="308" y="115" width="4" height="1" fill="#ffffff"/><rect x="309" y="108" width="2" height="1" fill="#000000"/><rect x="308" y="109" width="4" height="1" fill="#000000"/><rect x="308" y="110" width="4" height="1" fill="#000000"/><rect x="309" y="111" width="2" height="1" fill="#000000"/><rect x="516" y="104" width="4" height="1" fill="#808080"/><rect x="514" y="105" width="2" height="1" fill="#808080"/><rect x="516" y="105" width="4" height="1" fill="#404040"/><rect x="520" y="105" width="2" height="1" fill="#808080"/><rect x="513" y="106" width="1" height="1" fill="#808080"/><rect x="514" y="106" width="2" height="1" fill="#404040"/><rect x="516" y="106" width="4" height="1" fill="#ffffff"/><rect x="520" y="106" width="2" height="1" fill="#404040"/><rect x="522" y="106" width="1" height="1" fill="#ffffff"/><rect x="513" y="107" width="1" height="1" fill="#808080"/><rect x="514" y="107" width="1" height="1" fill="#404040"/><rect x="515" y="107" width="6" height="1" fill="#ffffff"/><rect x="521" y="107" width="1" height="1" fill="#d4d0c8"/><rect x="522" y="107" width="1" height="1" fill="#ffffff"/><rect x="512" y="108" width="1" height="1" fill="#808080"/><rect x="513" y="108" width="1" height="1" fill="#404040"/><rect x="514" y="108" width="8" height="1" fill="#ffffff"/><rect x="522" y="108" width="1" height="1" fill="#d4d0c8"/><rect x="523" y="108" width="1" height="1" fill="#ffffff"/><rect x="512" y="109" width="1" height="1" fill="#808080"/><rect x="513" y="109" width="1" height="1" fill="#404040"/><rect x="514" y="109" width="8" height="1" fill="#ffffff"/><rect x="522" y="109" width="1" height="1" fill="#d4d0c8"/><rect x="523" y="109" width="1" height="1" fill="#ffffff"/><rect x="512" y="110" width="1" height="1" fill="#808080"/><rect x="513" y="110" width="1" height="1" fill="#404040"/><rect x="514" y="110" width="8" height="1" fill="#ffffff"/><rect x="522" y="110" width="1" height="1" fill="#d4d0c8"/><rect x="523" y="110" width="1" height="1" fill="#ffffff"/><rect x="512" y="111" width="1" height="1" fill="#808080"/><rect x="513" y="111" width="1" height="1" fill="#404040"/><rect x="514" y="111" width="8" height="1" fill="#ffffff"/><rect x="522" y="111" width="1" height="1" fill="#d4d0c8"/><rect x="523" y="111" width="1" height="1" fill="#ffffff"/><rect x="513" y="112" width="1" height="1" fill="#808080"/><rect x="514" y="112" width="1" height="1" fill="#404040"/><rect x="515" y="112" width="6" height="1" fill="#ffffff"/><rect x="521" y="112" width="1" height="1" fill="#d4d0c8"/><rect x="522" y="112" width="1" height="1" fill="#ffffff"/><rect x="513" y="113" width="1" height="1" fill="#ffffff"/><rect x="514" y="113" width="2" height="1" fill="#d4d0c8"/><rect x="516" y="113" width="4" height="1" fill="#ffffff"/><rect x="520" y="113" width="2" height="1" fill="#d4d0c8"/><rect x="522" y="113" width="1" height="1" fill="#ffffff"/><rect x="514" y="114" width="2" height="1" fill="#ffffff"/><rect x="516" y="114" width="4" height="1" fill="#d4d0c8"/><rect x="520" y="114" width="2" height="1" fill="#ffffff"/><rect x="516" y="115" width="4" height="1" fill="#ffffff"/><rect x="185" y="532" width="13" height="13" fill="#ffffff"/><rect x="185" y="532" width="12" height="1" fill="#808080"/><rect x="185" y="532" width="1" height="12" fill="#808080"/><rect x="186" y="533" width="10" height="1" fill="#404040"/><rect x="186" y="533" width="1" height="10" fill="#404040"/><rect x="186" y="543" width="11" height="1" fill="#d4d0c8"/><rect x="196" y="533" width="1" height="11" fill="#d4d0c8"/><rect x="185" y="544" width="13" height="1" fill="#ffffff"/><rect x="197" y="532" width="1" height="13" fill="#ffffff"/><rect x="194" y="535" width="1" height="1" fill="#000000"/><rect x="193" y="536" width="2" height="1" fill="#000000"/><rect x="188" y="537" width="1" height="1" fill="#000000"/><rect x="192" y="537" width="3" height="1" fill="#000000"/><rect x="188" y="538" width="2" height="1" fill="#000000"/><rect x="191" y="538" width="3" height="1" fill="#000000"/><rect x="188" y="539" width="5" height="1" fill="#000000"/><rect x="189" y="540" width="3" height="1" fill="#000000"/><rect x="190" y="541" width="1" height="1" fill="#000000"/><rect x="185" y="552" width="13" height="13" fill="#ffffff"/><rect x="185" y="552" width="12" height="1" fill="#808080"/><rect x="185" y="552" width="1" height="12" fill="#808080"/><rect x="186" y="553" width="10" height="1" fill="#404040"/><rect x="186" y="553" width="1" height="10" fill="#404040"/><rect x="186" y="563" width="11" height="1" fill="#d4d0c8"/><rect x="196" y="553" width="1" height="11" fill="#d4d0c8"/><rect x="185" y="564" width="13" height="1" fill="#ffffff"/><rect x="197" y="552" width="1" height="13" fill="#ffffff"/><rect x="657" y="546" width="13" height="13" fill="#ffffff"/><rect x="657" y="546" width="12" height="1" fill="#808080"/><rect x="657" y="546" width="1" height="12" fill="#808080"/><rect x="658" y="547" width="10" height="1" fill="#404040"/><rect x="658" y="547" width="1" height="10" fill="#404040"/><rect x="658" y="557" width="11" height="1" fill="#d4d0c8"/><rect x="668" y="547" width="1" height="11" fill="#d4d0c8"/><rect x="657" y="558" width="13" height="1" fill="#ffffff"/><rect x="669" y="546" width="1" height="13" fill="#ffffff"/><rect x="22" y="557" width="134" height="4" fill="#d4d0c8"/><rect x="22" y="557" width="133" height="1" fill="#808080"/><rect x="22" y="557" width="1" height="3" fill="#808080"/><rect x="23" y="558" width="131" height="1" fill="#404040"/><rect x="23" y="558" width="1" height="1" fill="#404040"/><rect x="23" y="559" width="132" height="1" fill="#d4d0c8"/><rect x="22" y="560" width="134" height="1" fill="#ffffff"/><rect x="155" y="557" width="1" height="4" fill="#ffffff"/><rect x="58" y="550" width="10" height="1" fill="#ffffff"/><rect x="68" y="550" width="1" height="1" fill="#404040"/><rect x="58" y="551" width="1" height="1" fill="#ffffff"/><rect x="59" y="551" width="8" height="1" fill="#d4d0c8"/><rect x="67" y="551" width="1" height="1" fill="#808080"/><rect x="68" y="551" width="1" height="1" fill="#404040"/><rect x="58" y="552" width="1" height="1" fill="#ffffff"/><rect x="59" y="552" width="8" height="1" fill="#d4d0c8"/><rect x="67" y="552" width="1" height="1" fill="#808080"/><rect x="68" y="552" width="1" height="1" fill="#404040"/><rect x="58" y="553" width="1" height="1" fill="#ffffff"/><rect x="59" y="553" width="8" height="1" fill="#d4d0c8"/><rect x="67" y="553" width="1" height="1" fill="#808080"/><rect x="68" y="553" width="1" height="1" fill="#404040"/><rect x="58" y="554" width="1" height="1" fill="#ffffff"/><rect x="59" y="554" width="8" height="1" fill="#d4d0c8"/><rect x="67" y="554" width="1" height="1" fill="#808080"/><rect x="68" y="554" width="1" height="1" fill="#404040"/><rect x="58" y="555" width="1" height="1" fill="#ffffff"/><rect x="59" y="555" width="8" height="1" fill="#d4d0c8"/><rect x="67" y="555" width="1" height="1" fill="#808080"/><rect x="68" y="555" width="1" height="1" fill="#404040"/><rect x="58" y="556" width="1" height="1" fill="#ffffff"/><rect x="59" y="556" width="8" height="1" fill="#d4d0c8"/><rect x="67" y="556" width="1" height="1" fill="#808080"/><rect x="68" y="556" width="1" height="1" fill="#404040"/><rect x="58" y="557" width="1" height="1" fill="#ffffff"/><rect x="59" y="557" width="8" height="1" fill="#d4d0c8"/><rect x="67" y="557" width="1" height="1" fill="#808080"/><rect x="68" y="557" width="1" height="1" fill="#404040"/><rect x="58" y="558" width="1" height="1" fill="#ffffff"/><rect x="59" y="558" width="8" height="1" fill="#d4d0c8"/><rect x="67" y="558" width="1" height="1" fill="#808080"/><rect x="68" y="558" width="1" height="1" fill="#404040"/><rect x="58" y="559" width="1" height="1" fill="#ffffff"/><rect x="59" y="559" width="8" height="1" fill="#d4d0c8"/><rect x="67" y="559" width="1" height="1" fill="#808080"/><rect x="68" y="559" width="1" height="1" fill="#404040"/><rect x="58" y="560" width="1" height="1" fill="#ffffff"/><rect x="59" y="560" width="8" height="1" fill="#d4d0c8"/><rect x="67" y="560" width="1" height="1" fill="#808080"/><rect x="68" y="560" width="1" height="1" fill="#404040"/><rect x="58" y="561" width="1" height="1" fill="#ffffff"/><rect x="59" y="561" width="8" height="1" fill="#d4d0c8"/><rect x="67" y="561" width="1" height="1" fill="#808080"/><rect x="68" y="561" width="1" height="1" fill="#404040"/><rect x="58" y="562" width="1" height="1" fill="#ffffff"/><rect x="59" y="562" width="8" height="1" fill="#d4d0c8"/><rect x="67" y="562" width="1" height="1" fill="#808080"/><rect x="68" y="562" width="1" height="1" fill="#404040"/><rect x="58" y="563" width="1" height="1" fill="#ffffff"/><rect x="59" y="563" width="8" height="1" fill="#d4d0c8"/><rect x="67" y="563" width="1" height="1" fill="#808080"/><rect x="68" y="563" width="1" height="1" fill="#404040"/><rect x="58" y="564" width="1" height="1" fill="#ffffff"/><rect x="59" y="564" width="8" height="1" fill="#d4d0c8"/><rect x="67" y="564" width="1" height="1" fill="#808080"/><rect x="68" y="564" width="1" height="1" fill="#404040"/><rect x="59" y="565" width="1" height="1" fill="#ffffff"/><rect x="60" y="565" width="6" height="1" fill="#d4d0c8"/><rect x="66" y="565" width="1" height="1" fill="#808080"/><rect x="67" y="565" width="1" height="1" fill="#404040"/><rect x="60" y="566" width="1" height="1" fill="#ffffff"/><rect x="61" y="566" width="4" height="1" fill="#d4d0c8"/><rect x="65" y="566" width="1" height="1" fill="#808080"/><rect x="66" y="566" width="1" height="1" fill="#404040"/><rect x="61" y="567" width="1" height="1" fill="#ffffff"/><rect x="62" y="567" width="2" height="1" fill="#d4d0c8"/><rect x="64" y="567" width="1" height="1" fill="#808080"/><rect x="65" y="567" width="1" height="1" fill="#404040"/><rect x="62" y="568" width="1" height="1" fill="#ffffff"/><rect x="63" y="568" width="1" height="1" fill="#808080"/><rect x="64" y="568" width="1" height="1" fill="#404040"/><rect x="63" y="569" width="1" height="1" fill="#404040"/><rect x="305" y="557" width="134" height="4" fill="#d4d0c8"/><rect x="305" y="557" width="133" height="1" fill="#808080"/><rect x="305" y="557" width="1" height="3" fill="#808080"/><rect x="306" y="558" width="131" height="1" fill="#404040"/><rect x="306" y="558" width="1" height="1" fill="#404040"/><rect x="306" y="559" width="132" height="1" fill="#d4d0c8"/><rect x="305" y="560" width="134" height="1" fill="#ffffff"/><rect x="438" y="557" width="1" height="4" fill="#ffffff"/><rect x="372" y="550" width="10" height="1" fill="#ffffff"/><rect x="382" y="550" width="1" height="1" fill="#404040"/><rect x="372" y="551" width="1" height="1" fill="#ffffff"/><rect x="373" y="551" width="8" height="1" fill="#d4d0c8"/><rect x="381" y="551" width="1" height="1" fill="#808080"/><rect x="382" y="551" width="1" height="1" fill="#404040"/><rect x="372" y="552" width="1" height="1" fill="#ffffff"/><rect x="373" y="552" width="8" height="1" fill="#d4d0c8"/><rect x="381" y="552" width="1" height="1" fill="#808080"/><rect x="382" y="552" width="1" height="1" fill="#404040"/><rect x="372" y="553" width="1" height="1" fill="#ffffff"/><rect x="373" y="553" width="8" height="1" fill="#d4d0c8"/><rect x="381" y="553" width="1" height="1" fill="#808080"/><rect x="382" y="553" width="1" height="1" fill="#404040"/><rect x="372" y="554" width="1" height="1" fill="#ffffff"/><rect x="373" y="554" width="8" height="1" fill="#d4d0c8"/><rect x="381" y="554" width="1" height="1" fill="#808080"/><rect x="382" y="554" width="1" height="1" fill="#404040"/><rect x="372" y="555" width="1" height="1" fill="#ffffff"/><rect x="373" y="555" width="8" height="1" fill="#d4d0c8"/><rect x="381" y="555" width="1" height="1" fill="#808080"/><rect x="382" y="555" width="1" height="1" fill="#404040"/><rect x="372" y="556" width="1" height="1" fill="#ffffff"/><rect x="373" y="556" width="8" height="1" fill="#d4d0c8"/><rect x="381" y="556" width="1" height="1" fill="#808080"/><rect x="382" y="556" width="1" height="1" fill="#404040"/><rect x="372" y="557" width="1" height="1" fill="#ffffff"/><rect x="373" y="557" width="8" height="1" fill="#d4d0c8"/><rect x="381" y="557" width="1" height="1" fill="#808080"/><rect x="382" y="557" width="1" height="1" fill="#404040"/><rect x="372" y="558" width="1" height="1" fill="#ffffff"/><rect x="373" y="558" width="8" height="1" fill="#d4d0c8"/><rect x="381" y="558" width="1" height="1" fill="#808080"/><rect x="382" y="558" width="1" height="1" fill="#404040"/><rect x="372" y="559" width="1" height="1" fill="#ffffff"/><rect x="373" y="559" width="8" height="1" fill="#d4d0c8"/><rect x="381" y="559" width="1" height="1" fill="#808080"/><rect x="382" y="559" width="1" height="1" fill="#404040"/><rect x="372" y="560" width="1" height="1" fill="#ffffff"/><rect x="373" y="560" width="8" height="1" fill="#d4d0c8"/><rect x="381" y="560" width="1" height="1" fill="#808080"/><rect x="382" y="560" width="1" height="1" fill="#404040"/><rect x="372" y="561" width="1" height="1" fill="#ffffff"/><rect x="373" y="561" width="8" height="1" fill="#d4d0c8"/><rect x="381" y="561" width="1" height="1" fill="#808080"/><rect x="382" y="561" width="1" height="1" fill="#404040"/><rect x="372" y="562" width="1" height="1" fill="#ffffff"/><rect x="373" y="562" width="8" height="1" fill="#d4d0c8"/><rect x="381" y="562" width="1" height="1" fill="#808080"/><rect x="382" y="562" width="1" height="1" fill="#404040"/><rect x="372" y="563" width="1" height="1" fill="#ffffff"/><rect x="373" y="563" width="8" height="1" fill="#d4d0c8"/><rect x="381" y="563" width="1" height="1" fill="#808080"/><rect x="382" y="563" width="1" height="1" fill="#404040"/><rect x="372" y="564" width="1" height="1" fill="#ffffff"/><rect x="373" y="564" width="8" height="1" fill="#d4d0c8"/><rect x="381" y="564" width="1" height="1" fill="#808080"/><rect x="382" y="564" width="1" height="1" fill="#404040"/><rect x="373" y="565" width="1" height="1" fill="#ffffff"/><rect x="374" y="565" width="6" height="1" fill="#d4d0c8"/><rect x="380" y="565" width="1" height="1" fill="#808080"/><rect x="381" y="565" width="1" height="1" fill="#404040"/><rect x="374" y="566" width="1" height="1" fill="#ffffff"/><rect x="375" y="566" width="4" height="1" fill="#d4d0c8"/><rect x="379" y="566" width="1" height="1" fill="#808080"/><rect x="380" y="566" width="1" height="1" fill="#404040"/><rect x="375" y="567" width="1" height="1" fill="#ffffff"/><rect x="376" y="567" width="2" height="1" fill="#d4d0c8"/><rect x="378" y="567" width="1" height="1" fill="#808080"/><rect x="379" y="567" width="1" height="1" fill="#404040"/><rect x="376" y="568" width="1" height="1" fill="#ffffff"/><rect x="377" y="568" width="1" height="1" fill="#808080"/><rect x="378" y="568" width="1" height="1" fill="#404040"/><rect x="377" y="569" width="1" height="1" fill="#404040"/><rect x="583" y="541" width="50" height="24" fill="#ffffff"/><rect x="583" y="541" width="49" height="1" fill="#808080"/><rect x="583" y="541" width="1" height="23" fill="#808080"/><rect x="584" y="542" width="47" height="1" fill="#404040"/><rect x="584" y="542" width="1" height="21" fill="#404040"/><rect x="584" y="563" width="48" height="1" fill="#d4d0c8"/><rect x="631" y="542" width="1" height="22" fill="#d4d0c8"/><rect x="583" y="564" width="50" height="1" fill="#ffffff"/><rect x="632" y="541" width="1" height="24" fill="#ffffff"/><rect x="633" y="541" width="16" height="12" fill="#d4d0c8"/><rect x="633" y="541" width="15" height="1" fill="#ffffff"/><rect x="633" y="541" width="1" height="11" fill="#ffffff"/><rect x="634" y="551" width="14" height="1" fill="#808080"/><rect x="647" y="542" width="1" height="10" fill="#808080"/><rect x="633" y="552" width="16" height="1" fill="#404040"/><rect x="648" y="541" width="1" height="12" fill="#404040"/><rect x="633" y="553" width="16" height="12" fill="#d4d0c8"/><rect x="633" y="553" width="15" height="1" fill="#ffffff"/><rect x="633" y="553" width="1" height="11" fill="#ffffff"/><rect x="634" y="563" width="14" height="1" fill="#808080"/><rect x="647" y="554" width="1" height="10" fill="#808080"/><rect x="633" y="564" width="16" height="1" fill="#404040"/><rect x="648" y="553" width="1" height="12" fill="#404040"/><rect x="640" y="545" width="1" height="1" fill="#000000"/><rect x="639" y="546" width="3" height="1" fill="#000000"/><rect x="638" y="547" width="5" height="1" fill="#000000"/><rect x="638" y="557" width="5" height="1" fill="#000000"/><rect x="639" y="558" width="3" height="1" fill="#000000"/><rect x="640" y="559" width="1" height="1" fill="#000000"/></svg><!--/WIDGETS-->
<div class="t" style="left:586px;top:544px">3</div>
<div class="a" style="left:678px;top:546px;width:89px;height:16px;overflow:hidden"><div class="t" style="left:0;top:0;letter-spacing:0.12px">Толстые линии</div></div>
</body></html>
